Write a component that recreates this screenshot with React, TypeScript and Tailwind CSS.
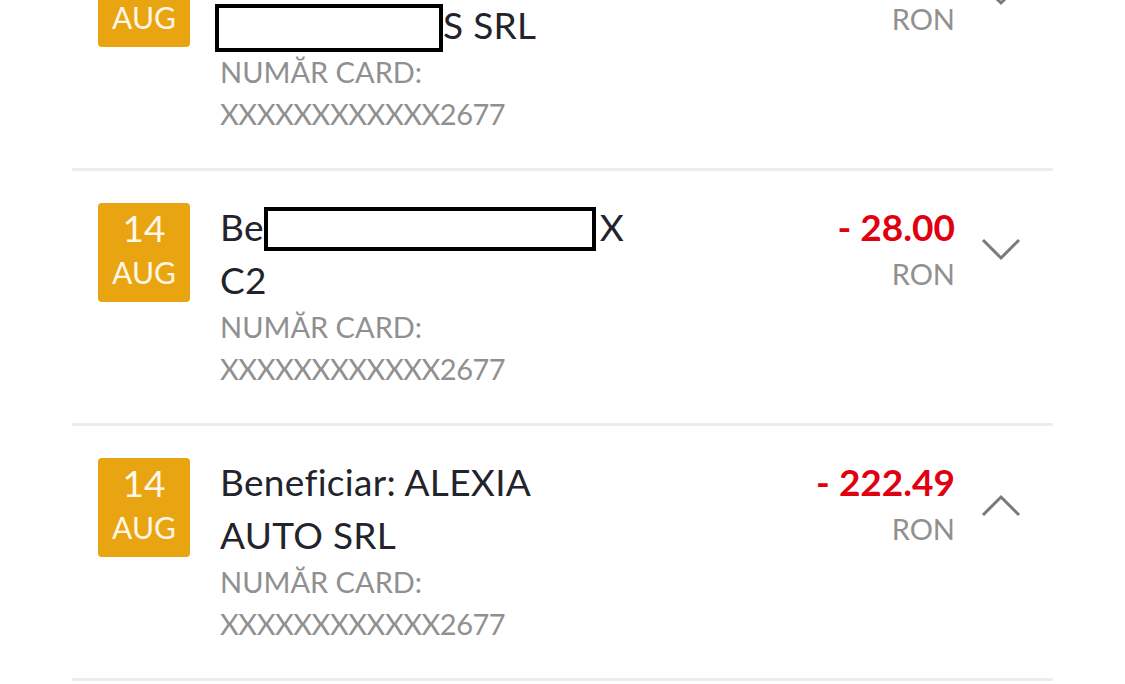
import React from "react";

type Tx = {
  day: string;
  month: string;
  lines: React.ReactNode[];
  amount: string;
  open: boolean;
};

function Redact({ spacer, box }: { spacer: string; box: string }) {
  // inline spacer that keeps the hidden text's room, with the black box drawn over it
  return (
    <span className={`relative inline-block align-top ${spacer}`}>
      <span className={`absolute border-[4px] border-black bg-white ${box}`} />
    </span>
  );
}

function Chevron({ up }: { up: boolean }) {
  return (
    <svg width="40" height="26" viewBox="0 0 40 26" className="block">
      <polyline
        points={up ? "2,24 20,6 38,24" : "2,2 20,20 38,2"}
        fill="none"
        stroke="#7a7a7a"
        strokeWidth="3"
      />
    </svg>
  );
}

const rows: Tx[] = [
  {
    day: "14",
    month: "AUG",
    lines: [
      "Beneficiar: MEGA",
      <>
        <Redact spacer="w-[223px] h-[53px]" box="left-[-5px] top-[6px] w-[228px] h-[48px]" />
        S SRL
      </>,
    ],
    amount: "- 41.50",
    open: false,
  },
  {
    day: "14",
    month: "AUG",
    lines: [
      <>
        Be
        <Redact spacer="w-[336px] h-[53px]" box="left-[0px] top-[7px] w-[332px] h-[44px]" />
        X
      </>,
      "C2",
    ],
    amount: "- 28.00",
    open: false,
  },
  {
    day: "14",
    month: "AUG",
    lines: ["Beneficiar: ALEXIA", "AUTO SRL"],
    amount: "- 222.49",
    open: true,
  },
];

export default function App() {
  return (
    <div className="h-[684px] w-[1125px] overflow-hidden bg-white font-['Lato',sans-serif]">
      <div className="mx-[72px] mt-[-84px]">
        {rows.map((r, i) => (
          <div key={i} className="border-b-[3px] border-[#ececec]">
            <div className="flex items-start pb-[33px] pl-[26px] pr-[32px] pt-[32px]">
              <div className="flex h-[99px] w-[92px] shrink-0 flex-col items-center justify-center rounded-[4px] bg-[#e9a412] pb-[5px] text-[#fff7e6]">
                <div className="text-[37px] leading-[44px]">{r.day}</div>
                <div className="text-[30px] leading-[44px]">{r.month}</div>
              </div>
              <div className="ml-[30px] mt-[-3px] flex-1">
                {r.lines.map((l, j) => (
                  <div key={j} className="whitespace-nowrap text-[37px] leading-[53px] tracking-[0.3px] text-[#23232b]">
                    {l}
                  </div>
                ))}
                <div className="text-[29px] leading-[42px] text-[#909090]">NUMĂR CARD:</div>
                <div className="text-[29px] leading-[42px] tracking-[-0.5px] text-[#909090]">
                  XXXXXXXXXXXX2677
                </div>
              </div>
              <div className="mt-[-3px] flex flex-col items-end">
                <div className="text-[37px] font-bold leading-[53px] text-[#e0000f]">{r.amount}</div>
                <div className="text-[29px] leading-[42px] text-[#909090]">RON</div>
              </div>
              <div className={`ml-[26px] ${r.open ? "mt-[33px]" : "mt-[35px]"}`}>
                <Chevron up={r.open} />
              </div>
            </div>
          </div>
        ))}
      </div>
    </div>
  );
}
